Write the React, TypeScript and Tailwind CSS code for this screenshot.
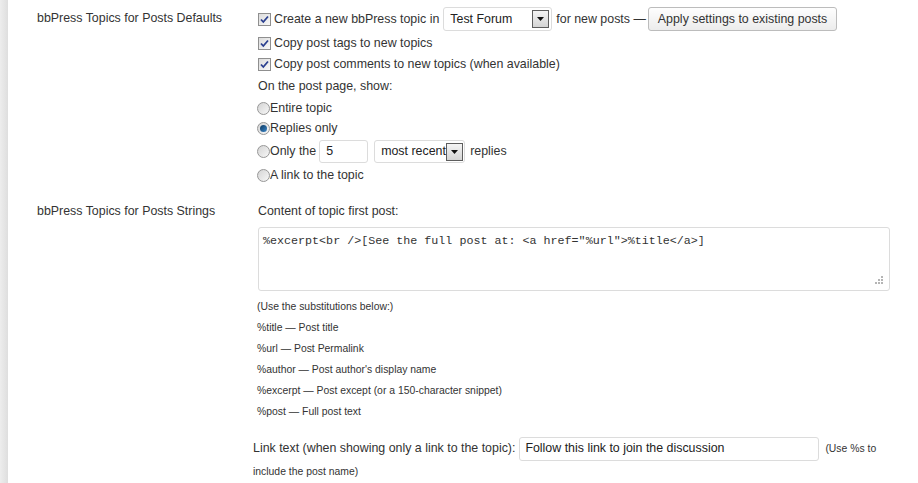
import React from 'react';

function Checkbox() {
    return (
        <span className="relative inline-block w-[13px] h-[13px] border border-[#8f8f8f] bg-gradient-to-br from-[#dcdcdc] to-[#f8f8f8] shrink-0">
            <svg viewBox="0 0 13 13" className="absolute -left-px -top-px w-[13px] h-[13px]">
                <path d="M3 6.5 L5.3 9 L10 3.5" fill="none" stroke="#2a3f8f" strokeWidth="1.8" />
            </svg>
        </span>
    );
}

function Radio({ checked = false }: { checked?: boolean }) {
    return (
        <span className="relative inline-flex items-center justify-center w-[13px] h-[13px] rounded-full border border-[#979797] bg-gradient-to-br from-[#d4d4d4] to-[#f7f7f7] shrink-0">
            {checked && <span className="w-[7px] h-[7px] rounded-full bg-gradient-to-br from-[#0d3a63] to-[#3a86c8]" />}
        </span>
    );
}

function Arrow() {
    return (
        <span className="inline-flex items-center justify-center w-[17px] h-[18px] border border-[#5d5d5d] bg-gradient-to-b from-[#f4f4f4] to-[#d4d4d4] shrink-0">
            <svg viewBox="0 0 7 4" className="w-[7px] h-[4px]">
                <path d="M0 0 L7 0 L3.5 4 Z" fill="#111" />
            </svg>
        </span>
    );
}

const subs = [
    '%title — Post title',
    '%url — Post Permalink',
    "%author — Post author's display name",
    '%excerpt — Post except (or a 150-character snippet)',
    '%post — Full post text',
];

export default function App() {
    return (
        <div className="flex min-h-[483px] bg-white text-[#333] text-[12.4px]" style={{ fontFamily: '"Liberation Sans", Arial, sans-serif' }}>
            <div className="w-[8px] shrink-0 bg-gradient-to-r from-[#ededed] to-[#dedede]" />
            <div className="flex-1">
                {/* Defaults */}
                <div className="flex pt-[5px]">
                    <div className="w-[250px] pl-[29px] shrink-0 h-[27px] flex items-center">bbPress Topics for Posts Defaults</div>
                    <div className="flex flex-col">
                        <div className="flex items-center h-[28px]">
                            <Checkbox />
                            <span className="ml-[3px]">Create a new bbPress topic in</span>
                            <div className="ml-[4px] w-[109px] h-[24px] border border-[#dcdcdc] rounded-[3px] flex items-center justify-between pl-[6px] pr-[2px]">
                                <span className="text-[#222]">Test Forum</span>
                                <Arrow />
                            </div>
                            <span className="ml-[4px]">for new posts —</span>
                            <button className="ml-[2px] h-[24px] px-[9px] border border-[#bcbcbc] rounded-[3px] bg-gradient-to-b from-[#fefefe] to-[#ececec] text-[#333]">
                                Apply settings to existing posts
                            </button>
                        </div>
                        <div className="flex items-center h-[21px]">
                            <Checkbox />
                            <span className="ml-[3px]">Copy post tags to new topics</span>
                        </div>
                        <div className="flex items-center h-[21px]">
                            <Checkbox />
                            <span className="ml-[3px]">Copy post comments to new topics (when available)</span>
                        </div>
                        <div className="flex items-center h-[23px]">On the post page, show:</div>
                        <div className="flex items-center h-[20px] -ml-px">
                            <Radio />
                            <span>Entire topic</span>
                        </div>
                        <div className="flex items-center h-[21px] -ml-px">
                            <Radio checked />
                            <span>Replies only</span>
                        </div>
                        <div className="flex items-center h-[25px] -ml-px">
                            <Radio />
                            <span>Only the</span>
                            <div className="ml-[3px] w-[49px] h-[23px] border border-[#dcdcdc] rounded-[3px] flex items-center pl-[6px] text-[#222]">5</div>
                            <div className="ml-[6px] w-[91px] h-[23px] border border-[#dcdcdc] rounded-[3px] flex items-center justify-between pl-[6px] pr-[2px] whitespace-nowrap overflow-hidden">
                                <span className="text-[#222]">most recent</span>
                                <Arrow />
                            </div>
                            <span className="ml-[5px]">replies</span>
                        </div>
                        <div className="flex items-center h-[23px] -ml-px">
                            <Radio />
                            <span>A link to the topic</span>
                        </div>
                    </div>
                </div>

                {/* Strings */}
                <div className="flex pt-[14px]">
                    <div className="w-[250px] pl-[29px] shrink-0 h-[20px] flex items-center">bbPress Topics for Posts Strings</div>
                    <div className="flex flex-col w-[632px]">
                        <div className="flex items-center h-[20px]">Content of topic first post:</div>
                        <div className="relative mt-[6px] h-[64px] border border-[#dcdcdc] rounded-[3px]">
                            <div className="pl-[4px] pt-[5px] text-[11.7px] text-[#333]" style={{ fontFamily: '"Liberation Mono", Consolas, monospace' }}>
                                {'%excerpt<br />[See the full post at: <a href="%url">%title</a>]'}
                            </div>
                            <svg viewBox="0 0 9 9" className="absolute right-[5px] bottom-[5px] w-[9px] h-[9px]">
                                <g fill="#b5b5b5">
                                    <rect x="6" y="0" width="2" height="2" />
                                    <rect x="3" y="3" width="2" height="2" />
                                    <rect x="6" y="3" width="2" height="2" />
                                    <rect x="0" y="6" width="2" height="2" />
                                    <rect x="3" y="6" width="2" height="2" />
                                    <rect x="6" y="6" width="2" height="2" />
                                </g>
                            </svg>
                        </div>
                        <div className="flex flex-col mt-[5px] text-[10.4px] -ml-px">
                            <div className="h-[21px] flex items-center">(Use the substitutions below:)</div>
                            {subs.map((s) => (
                                <div key={s} className="h-[21px] flex items-center">{s}</div>
                            ))}
                        </div>
                    </div>
                </div>

                <div className="pl-[245px] mt-[14px]">
                    <div className="flex items-center h-[25px]">
                        <span>Link text (when showing only a link to the topic):</span>
                        <div className="ml-[4px] w-[300px] h-[24px] border border-[#dcdcdc] rounded-[3px] flex items-center pl-[5px] text-[#222]">
                            Follow this link to join the discussion
                        </div>
                        <span className="ml-[6px] text-[10.4px]">(Use %s to</span>
                    </div>
                    <div className="h-[21px] flex items-center text-[10.4px]">include the post name)</div>
                </div>
            </div>
        </div>
    );
}
